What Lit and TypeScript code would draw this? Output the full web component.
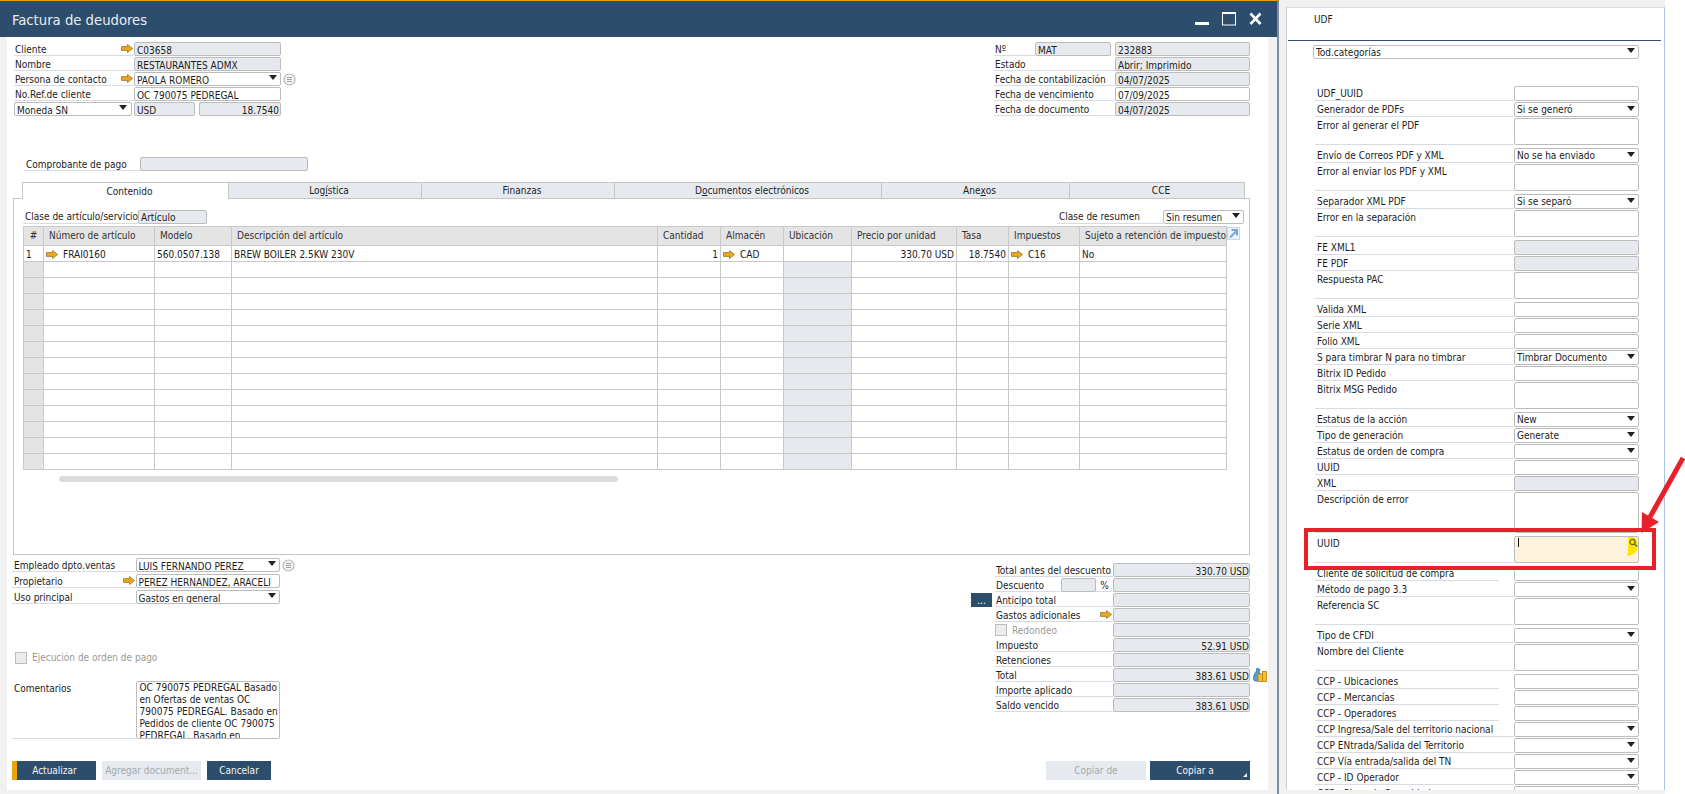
import { LitElement, html, css, svg } from "lit";
import { customElement } from "lit/decorators.js";

const arrow = html`<svg class="arr" width="12" height="9" viewBox="0 0 12 9"><path d="M.5 2.6H6.5V.5L11.6 4.5 6.5 8.5V6.4H.5Z" fill="#f0a61c" stroke="#8f6a1a" stroke-width=".7"/></svg>`;
const info = html`<svg class="info" width="13" height="13" viewBox="0 0 13 13"><circle cx="6.5" cy="6.5" r="5.5" fill="#f4f4f4" stroke="#b5b5b5" stroke-width="1.2"/><path d="M4 4.5H9M4 6.5H9M4 8.5H9" stroke="#a0a0a0"/></svg>`;
const tri = html`<i class="tri"></i>`;

type Cell = { t?: string; arrow?: boolean; right?: boolean };
const cols = ["#", "Número de artículo", "Modelo", "Descripción del artículo", "Cantidad", "Almacén", "Ubicación", "Precio por unidad", "Tasa", "Impuestos", "Sujeto a retención de impuesto"];
const row1: Cell[] = [
  { t: "1" }, { t: "FRAI0160", arrow: true }, { t: "560.0507.138" }, { t: "BREW BOILER 2.5KW 230V" }, { t: "1", right: true },
  { t: "CAD", arrow: true }, {}, { t: "330.70 USD", right: true }, { t: "18.7540", right: true }, { t: "C16", arrow: true }, { t: "No" },
];

type Kind = "text" | "select" | "grey" | "big" | "tall" | "active";
type Udf = { l: string; k: Kind; v?: string; short?: boolean };
const udf: Udf[] = [
  { l: "UDF_UUID", k: "text" },
  { l: "Generador de PDFs", k: "select", v: "Si se generó" },
  { l: "Error al generar el PDF", k: "big" },
  { l: "Envío de Correos PDF y XML", k: "select", v: "No se ha enviado" },
  { l: "Error al enviar los PDF y XML", k: "big" },
  { l: "Separador XML PDF", k: "select", v: "Si se separó" },
  { l: "Error en la separación", k: "big" },
  { l: "FE XML1", k: "grey" },
  { l: "FE PDF", k: "grey" },
  { l: "Respuesta PAC", k: "big" },
  { l: "Valida XML", k: "text" },
  { l: "Serie XML", k: "text" },
  { l: "Folio XML", k: "text" },
  { l: "S para timbrar N para no timbrar", k: "select", v: "Timbrar Documento" },
  { l: "Bitrix ID Pedido", k: "text" },
  { l: "Bitrix MSG Pedido", k: "big" },
  { l: "Estatus de la acción", k: "select", v: "New" },
  { l: "Tipo de generación", k: "select", v: "Generate" },
  { l: "Estatus de orden de compra", k: "select" },
  { l: "UUID", k: "text" },
  { l: "XML", k: "grey" },
  { l: "Descripción de error", k: "tall" },
  { l: "UUID", k: "active" },
  { l: "Cliente de solicitud de compra", k: "text", short: true },
  { l: "Método de pago 3.3", k: "select" },
  { l: "Referencia SC", k: "big" },
  { l: "Tipo de CFDI", k: "select" },
  { l: "Nombre del Cliente", k: "big" },
  { l: "CCP - Ubicaciones", k: "text", short: true },
  { l: "CCP - Mercancías", k: "text", short: true },
  { l: "CCP - Operadores", k: "text", short: true },
  { l: "CCP Ingresa/Sale del territorio nacional", k: "select" },
  { l: "CCP ENtrada/Salida del Territorio", k: "select" },
  { l: "CCP Vía entrada/salida del TN", k: "select" },
  { l: "CCP - ID Operador", k: "select" },
  { l: "CCP - Placa de Seguridad", k: "text" },
];

@customElement("app-root")
export class AppRoot extends LitElement {
  static styles = css`
    :host { display: block; width: 1685px; height: 794px; overflow: hidden; background: #f1f1f1; font: 10px/13px "DejaVu Sans Condensed", "Liberation Sans", Arial, sans-serif; color: #1c1c1c; }
    * { box-sizing: border-box; }
    .page { display: flex; height: 794px; }
    .win { width: 1277px; display: flex; flex-direction: column; }
    .title { height: 37px; background: #2d4d6c; border-top: 1px solid #e9a30f; display: flex; align-items: center; padding: 0 14px 0 12px; color: #e9eef3; font-size: 14.7px; }
    .title span { flex: 1; margin-top: 1px; }
    .title svg { display: block; margin-top: -1px; }
    .wbody { flex: none; height: 753px; margin: 0 9px 0 7px; background: #fff; }
    .hdr { display: flex; justify-content: space-between; padding: 5px 18px 0 7px; height: 79px; }
    .hl { display: grid; grid-template-columns: 120px 61px 4px 82px 14px; grid-auto-rows: 14px; row-gap: 1px; }
    .hr { display: grid; grid-template-columns: 41px 76px 4px 135px; grid-auto-rows: 14px; row-gap: 1px; }
    .lab { display: flex; align-items: center; border-bottom: 1px solid #d6dce2; padding-left: 1px; white-space: nowrap; min-width: 0; }
    .lab span { flex: 1; }
    .lab .arr { margin-right: 1px; }
    .s3 { grid-column: span 3; }
    .f { display: flex; align-items: center; border: 1px solid #bcbcbc; border-radius: 2px; background: #fff; padding: 0 1px 0 2px; white-space: nowrap; overflow: hidden; min-width: 0; }
    .f span { flex: 1; overflow: hidden; }
    .shift .f span, .shift .lab span, .shift .money span { position: relative; top: 1px; }
    .g { background: #e6eaee; }
    .r { text-align: right; }
    .tri { flex: none; width: 0; height: 0; border: 4px solid transparent; border-top: 5px solid #222; border-bottom: 0; margin: 0 2px 3px 2px; }
    .info { align-self: center; margin-left: 2px; display: block; }
    .money { border: 1px solid #bcbcbc; border-radius: 2px; padding: 0 2px; width: 118px; display: flex; align-items: center; }
    .money span { flex: 1; }
    .comp { margin: 41px 0 0 17px; display: grid; grid-template-columns: 116px 168px; height: 14px; }
    .comp .lab { padding-left: 2px; }
    .tabs { margin: 11px 0 0 6px; width: 1237px; height: 17px; display: flex; }
    .gapb { border-bottom: 1px solid #c6c6c6; }
    .tab { display: flex; align-items: center; justify-content: center; background: #e6eaee; border: 1px solid #c6c6c6; border-left: 0; padding-left: 8px; }
    .tab.on { background: #fff; border-left: 1px solid #c6c6c6; border-bottom: 0; }
    .panel { margin-left: 6px; width: 1237px; height: 356px; border: 1px solid #c6c6c6; border-top: 0; padding: 11px 0 0 9px; }
    .clase { display: flex; height: 14px; padding-right: 5px; }
    .clase .lab { padding-left: 2px; }
    .c1 { width: 115px; }
    .c2 { width: 69px; }
    .c3 { width: 106px; margin-left: auto; }
    .c4 { width: 81px; }
    .gridw { position: relative; margin-top: 2px; }
    .grid { display: grid; grid-template-columns: 20px 111px 77px 426px 63px 63px 68px 105px 52px 71px 147px; grid-template-rows: 19px repeat(14, 16px); width: 1204px; border-top: 1px solid #c9c9c9; border-left: 1px solid #c9c9c9; }
    .grid div { border-right: 1px solid #c9c9c9; border-bottom: 1px solid #c9c9c9; padding: 0 2px; display: flex; align-items: center; gap: 5px; white-space: nowrap; overflow: hidden; }
    .grid .h { background: #e4e4e4; padding: 0 5px 2px; color: #333; }
    .grid .v { padding-top: 2px; }
    .grid .h0 { justify-content: center; }
    .grid .rr { justify-content: flex-end; }
    .grid .hd { background: #e4e4e4; }
    .grid .loc { background: #e6eaee; }
    .expand { position: absolute; left: 1204px; top: 1px; display: block; }
    .scroll { margin: 6px 0 0 36px; width: 559px; height: 6px; background: #dcdcdc; border-radius: 3px; }
    .low { display: flex; justify-content: space-between; height: 203px; margin: 3px 1px 0 5px; }
    .ll { width: 300px; }
    .lg { display: grid; grid-template-columns: 123.5px 144px 14px; grid-auto-rows: 14px; row-gap: 2px; }
    .lg .lab { padding-left: 2px; }
    .chk { display: flex; align-items: center; gap: 5px; color: #9a9a9a; }
    .box { display: block; width: 12px; height: 12px; background: #ececec; border: 1px solid #bcbcbc; flex: none; }
    .ej { margin: 47px 0 0 3px; height: 13px; }
    .com { display: grid; grid-template-columns: 123.5px 144px; height: 58px; margin-top: 17px; }
    .com .lab { align-items: flex-start; padding: 1px 0 0 2px; }
    .ta { border: 1px solid #bcbcbc; border-radius: 2px; padding: 0 3px; line-height: 12px; overflow: hidden; white-space: nowrap; }
    .tot { width: 296px; padding-top: 5px; display: grid; grid-template-columns: 24px 118px 137px 17px; grid-auto-rows: 14px; row-gap: 1px; }
    .more { background: #2d4d6c; color: #fff; margin-right: 3px; display: flex; align-items: center; justify-content: center; line-height: 9px; }
    .pc { width: 17px; flex: none !important; text-align: center; }
    .tot .f { padding-right: 0; }
    .tot .small { width: 35px; height: 14px; flex: none; }
    .coin { display: block; margin: -1px 0 0 3px; }
    .btns { display: flex; height: 19px; padding-left: 5px; }
    .b { display: flex; align-items: center; justify-content: center; background: #2d4d6c; color: #f2f5f7; position: relative; white-space: nowrap; }
    .b.off { background: #e6eaee; color: #a2a9b0; }
    .act { width: 84px; border-left: 5px solid #e9a30f; padding-right: 4px; }
    .add { width: 99px; margin-left: 6px; }
    .can { width: 64px; margin-left: 6px; }
    .cde { width: 100px; margin-left: auto; }
    .cpa { width: 100px; margin: 0 18px 0 4px; padding-right: 10px; }
    .cpa::after { content: ""; position: absolute; right: 3px; bottom: 3px; border: 2.5px solid #fff; border-top-color: transparent; border-left-color: transparent; }
    .sep { width: 2px; background: #7c8c9c; }
    .gut { width: 7px; background: #f1f1f1; }
    .side { width: 379px; height: 783px; margin-top: 7px; background: #fff; border-left: 1px solid #d0d0d0; border-right: 1px solid #a9c4de; border-top: 1px solid #dedede; overflow: hidden; position: relative; }
    .udfh { height: 33px; padding: 5px 0 0 26px; border-bottom: 1px solid #33506e; margin: 0 3px 0 1px; }
    .cat { margin: 4px 0 27px 26px; width: 325.5px; height: 14px; }
    .urow { display: grid; grid-template-columns: 199px 124.5px; height: 14px; margin: 0 0 2px 28px; }
    .urow.big { height: 27px; margin-bottom: 3px; }
    .urow.tall { height: 41px; margin-bottom: 3px; }
    .urow .lab { padding-left: 2px; align-items: flex-start; padding-top: 1px; }
    .urow .short { margin-right: 15px; }
    .active { background: #fdf3dc; position: relative; }
    .caret { position: absolute; left: 3px; top: 1px; width: 1px; height: 9px; background: #111; }
    .hl-y { position: absolute; right: 0; top: -2px; display: block; }
    .rbox { position: absolute; left: 17px; top: 520px; width: 352px; height: 42px; border: 4px solid #e8202a; }
    .free { width: 20px; position: relative; background: #fff; height: 794px; }
    .edge { position: absolute; left: 377px; top: 37px; width: 1px; height: 155px; background: #5c7d9e; }
    .over { position: absolute; left: 1640px; top: 455px; display: block; }
  `;

  private lab(t: string, cls = "", withArrow = false) {
    return html`<div class="lab ${cls}"><span>${t}</span>${withArrow ? arrow : ""}</div>`;
  }
  private fld(t = "", cls = "") {
    return html`<div class="f ${cls}"><span>${t}</span></div>`;
  }
  private sel(t = "", cls = "") {
    return html`<div class="f ${cls}"><span>${t}</span>${tri}</div>`;
  }

  private udfRow(u: Udf) {
    const big = u.k === "big" || u.k === "active" ? "big" : u.k === "tall" ? "tall" : "";
    let f;
    if (u.k === "select") f = this.sel(u.v ?? "");
    else if (u.k === "grey") f = this.fld("", "g");
    else if (u.k === "active") f = html`<div class="f active"><i class="caret"></i>
      <svg class="hl-y" width="11" height="22" viewBox="0 0 11 22"><path d="M1 0H3C8 2 11 6 11 11 11 16 8 20 0 21 2 14 1 6 1 0Z" fill="#ffe600"/><circle cx="5.5" cy="7" r="2.6" fill="none" stroke="#5d6d1c" stroke-width="1.2"/><path d="M7.5 9L10 11.5" stroke="#666" stroke-width="1.4"/></svg></div>`;
    else f = this.fld();
    return html`<div class="urow ${big}">${this.lab(u.l, u.short ? "short" : "")}${f}</div>`;
  }

  render() {
    const tabs: [any, number, boolean?][] = [
      ["Contenido", 207, true],
      [html`Log<u>í</u>stica`, 193],
      ["Finanzas", 193],
      [html`D<u>o</u>cumentos electrónicos`, 267],
      [html`Ane<u>x</u>os`, 188],
      ["CCE", 175],
    ];
    return html`<div class="page">
      <section class="win">
        <header class="title"><span>Factura de deudores</span>
          <svg width="68" height="14" viewBox="0 0 68 14">
            <path d="M0 11.5H14" stroke="#fff" stroke-width="3"/>
            <rect x="27.5" y=".5" width="13" height="12.5" fill="none" stroke="#fff" stroke-width="1"/>
            <path d="M27.5 1H40.5" stroke="#fff" stroke-width="2"/>
            <path d="M55.5 1.5L65.5 12M65.5 1.5L55.5 12" stroke="#fff" stroke-width="2.6"/>
          </svg>
        </header>
        <div class="wbody">
          <div class="hdr">
            <div class="hl shift">
              ${this.lab("Cliente", "", true)}${this.fld("C03658", "g s3")}<i></i>
              ${this.lab("Nombre")}${this.fld("RESTAURANTES ADMX", "g s3")}<i></i>
              ${this.lab("Persona de contacto", "", true)}${this.sel("PAOLA ROMERO", "s3")}${info}
              ${this.lab("No.Ref.de cliente")}${this.fld("OC 790075 PEDREGAL", "s3")}<i></i>
              <div class="money"><span>Moneda SN</span>${tri}</div>${this.fld("USD", "g")}<i></i>${this.fld("18.7540", "g r")}<i></i>
            </div>
            <div class="hr shift">
              ${this.lab("Nº")}${this.fld("MAT", "g")}<i></i>${this.fld("232883", "g")}
              ${this.lab("Estado", "s3")}${this.fld("Abrir; Imprimido", "g")}
              ${this.lab("Fecha de contabilización", "s3")}${this.fld("04/07/2025", "g")}
              ${this.lab("Fecha de vencimiento", "s3")}${this.fld("07/09/2025")}
              ${this.lab("Fecha de documento", "s3")}${this.fld("04/07/2025", "g")}
            </div>
          </div>
          <div class="comp shift">${this.lab("Comprobante de pago")}${this.fld("", "g")}</div>
          <nav class="tabs">
            <div class="gapb" style="width:9px"></div>
            ${tabs.map(([t, w, on]) => html`<div class="tab ${on ? "on" : ""}" style="width:${w}px">${t}</div>`)}
            <div class="gapb" style="flex:1"></div>
          </nav>
          <div class="panel">
            <div class="clase">
              ${this.lab("Clase de artículo/servicio", "c1")}${this.fld("Artículo", "g c2")}
              ${this.lab("Clase de resumen", "c3")}${this.sel("Sin resumen", "c4")}
            </div>
            <div class="gridw">
              <div class="grid">
                ${cols.map((c, i) => html`<div class="h ${i === 0 ? "h0" : ""}">${c}</div>`)}
                ${row1.map((c) => html`<div class="v ${c.right ? "rr" : ""}">${c.arrow ? arrow : ""}${c.t ?? ""}</div>`)}
                ${Array.from({ length: 13 }, () =>
                  cols.map((_, i) => html`<div class="${i === 0 ? "hd" : i === 6 ? "loc" : ""}"></div>`)
                )}
              </div>
              <svg class="expand" width="13" height="13" viewBox="0 0 13 13"><rect x=".5" y=".5" width="12" height="12" fill="#eaf2fa" stroke="#c4d9ee"/><path d="M3 10.5L9.5 4M4.5 3H10V8.5" fill="none" stroke="#7aa7d6" stroke-width="2"/></svg>
            </div>
            <div class="scroll"></div>
          </div>
          <div class="low">
            <div class="ll">
              <div class="lg shift">
                ${this.lab("Empleado dpto.ventas")}${this.sel("LUIS FERNANDO PEREZ")}${info}
                ${this.lab("Propietario", "", true)}${this.fld("PEREZ HERNANDEZ, ARACELI")}<i></i>
                ${this.lab("Uso principal")}${this.sel("Gastos en general")}<i></i>
              </div>
              <div class="chk ej"><i class="box"></i>Ejecución de orden de pago</div>
              <div class="com">
                ${this.lab("Comentarios")}
                <div class="ta">OC 790075 PEDREGAL Basado<br>en Ofertas de ventas OC<br>790075 PEDREGAL. Basado en<br>Pedidos de cliente OC 790075<br>PEDREGAL. Basado en</div>
              </div>
            </div>
            <div class="tot shift">
              <i></i>${this.lab("Total antes del descuento")}${this.fld("330.70 USD", "g r")}<i></i>
              <i></i><div class="lab"><span>Descuento</span>${this.fld("", "g small")}<span class="pc">%</span></div>${this.fld("", "g")}<i></i>
              <div class="more">...</div>${this.lab("Anticipo total")}${this.fld("", "g")}<i></i>
              <i></i>${this.lab("Gastos adicionales", "", true)}${this.fld("", "g")}<i></i>
              <i></i><div class="chk"><i class="box"></i>Redondeo</div>${this.fld("", "g")}<i></i>
              <i></i>${this.lab("Impuesto")}${this.fld("52.91 USD", "g r")}<i></i>
              <i></i>${this.lab("Retenciones")}${this.fld("", "g")}<i></i>
              <i></i>${this.lab("Total")}${this.fld("383.61 USD", "g r")}
              <svg class="coin" width="14" height="15" viewBox="0 0 14 15"><path d="M4 1L7 2.5 6 5C8 6 8 10 8 14H2C0 14-.5 9 3 5Z" fill="#5b9bd5" stroke="#2f6ea8" stroke-width=".8"/><rect x="5" y="7" width="4.5" height="7.5" fill="#f5c02c" stroke="#b57f10" stroke-width=".8"/><rect x="9.5" y="4.5" width="4" height="10" fill="#f5c02c" stroke="#b57f10" stroke-width=".8"/></svg>
              <i></i>${this.lab("Importe aplicado")}${this.fld("", "g")}<i></i>
              <i></i>${this.lab("Saldo vencido")}${this.fld("383.61 USD", "g r")}<i></i>
            </div>
          </div>
          <div class="btns">
            <div class="b act">Actualizar</div>
            <div class="b off add">Agregar document...</div>
            <div class="b can">Cancelar</div>
            <div class="b off cde">Copiar de</div>
            <div class="b cpa">Copiar a</div>
          </div>
        </div>
      </section>
      <div class="sep"></div>
      <div class="gut"></div>
      <aside class="side">
        <div class="udfh">UDF</div>
        ${this.sel("Tod.categorías", "cat")}
        ${udf.map((u) => this.udfRow(u))}
        <i class="edge"></i>
        <div class="rbox"></div>
      </aside>
      <div class="free"></div>
      <svg class="over" width="45" height="80" viewBox="0 0 45 80">
        ${svg`<path d="M43 3L10 62" stroke="#e8202a" stroke-width="5" fill="none"/><path d="M2 57L19 67 1.5 78Z" fill="#e8202a"/>`}
      </svg>
    </div>`;
  }
}
